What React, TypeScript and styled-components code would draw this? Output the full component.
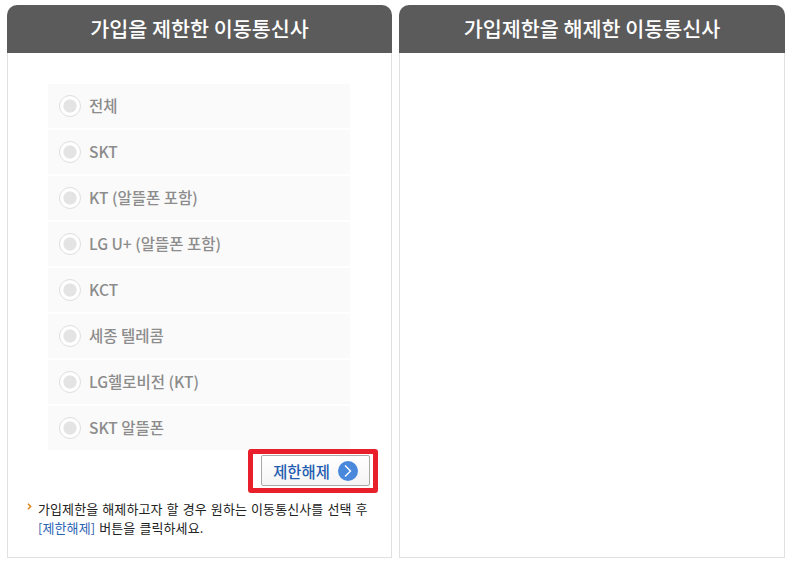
import styled, { createGlobalStyle } from "styled-components";

const carriers = [
  "전체",
  "SKT",
  "KT (알뜰폰 포함)",
  "LG U+ (알뜰폰 포함)",
  "KCT",
  "세종 텔레콤",
  "LG헬로비전 (KT)",
  "SKT 알뜰폰",
];

const App = () => {
  return (
    <>
      <GlobalStyle />
      <Page>
        <Panel>
          <PanelTitle>가입을 제한한 이동통신사</PanelTitle>
          <PanelBody>
            <CarrierList>
              {carriers.map((name) => (
                <CarrierRow key={name}>
                  <Radio />
                  <CarrierName>{name}</CarrierName>
                </CarrierRow>
              ))}
            </CarrierList>
            <ButtonRow>
              <Highlight>
                <ReleaseButton type="button">
                  제한해제
                  <ArrowCircle>
                    <svg width="10" height="14" viewBox="0 0 10 14" fill="none">
                      <path d="M2 1.5 7.5 7 2 12.5" stroke="#fff" strokeWidth="1.4" />
                    </svg>
                  </ArrowCircle>
                </ReleaseButton>
              </Highlight>
            </ButtonRow>
            <Notice>
              <Chevron>
                <svg width="5" height="7" viewBox="0 0 5 7" fill="none">
                  <path d="M1 .8 3.6 3.5 1 6.2" stroke="#e08a1e" strokeWidth="1.6" />
                </svg>
              </Chevron>
              <NoticeText>
                가입제한을 해제하고자 할 경우 원하는 이동통신사를 선택 후
                <br />
                <NoticeLink>[제한해제]</NoticeLink> 버튼을 클릭하세요.
              </NoticeText>
            </Notice>
          </PanelBody>
        </Panel>
        <Panel>
          <PanelTitle>가입제한을 해제한 이동통신사</PanelTitle>
          <PanelBody />
        </Panel>
      </Page>
    </>
  );
};

export default App;

const GlobalStyle = createGlobalStyle`
  html, body {
    margin: 0;
    padding: 0;
    background: #fff;
  }
  body {
    font-family: "Noto Sans CJK KR", "Noto Sans", sans-serif;
  }
`;
const Page = styled.div`
  display: grid;
  grid-template-columns: 385px 386px;
  gap: 7px;
  width: 778px;
  height: 553px;
  padding: 5px 6px 10px 7px;
`;
const Panel = styled.section`
  display: flex;
  flex-direction: column;
  min-width: 0;
`;
const PanelTitle = styled.h2`
  margin: 0;
  height: 48px;
  line-height: 46px;
  border-radius: 10px 10px 0 0;
  background: #5b5b5b;
  color: #fff;
  font-size: 20.7px;
  font-weight: 500;
  text-align: center;
`;
const PanelBody = styled.div`
  flex: 1;
  border: 1px solid #e0e0e0;
  border-top: 0;
  padding: 31px 13px 0 19px;
`;
const CarrierList = styled.ul`
  display: flex;
  flex-direction: column;
  gap: 2px;
  margin: 0 0 0 21px;
  padding: 0;
  width: 302px;
  list-style: none;
`;
const CarrierRow = styled.li`
  display: flex;
  align-items: center;
  gap: 8px;
  height: 44px;
  padding-left: 11px;
  background: #fafafa;
`;
const Radio = styled.span`
  box-sizing: border-box;
  width: 22px;
  height: 22px;
  border: 1px solid #dedede;
  border-radius: 50%;
  background: radial-gradient(circle, #e4e4e4 0 6.3px, #fff 6.9px);
`;
const CarrierName = styled.span`
  position: relative;
  top: -1px;
  color: #8c8c8c;
  font-size: 15.5px;
  font-weight: 500;
`;
const ButtonRow = styled.div`
  display: flex;
  justify-content: flex-end;
  margin-top: -1px;
`;
const Highlight = styled.div`
  display: flex;
  box-sizing: border-box;
  width: 130px;
  height: 44px;
  padding: 1px 3px 2px 8px;
  border: 5px solid #e8202c;
  border-radius: 3px;
`;
const ReleaseButton = styled.button`
  display: flex;
  align-items: center;
  justify-content: center;
  gap: 8px;
  flex: 1;
  padding: 0;
  border: 1px solid #a9a9a9;
  border-radius: 2px;
  background: linear-gradient(#fff, #f4f4f4);
  color: #1f5cb0;
  font-family: inherit;
  font-size: 15.4px;
  font-weight: 500;
`;
const ArrowCircle = styled.span`
  display: flex;
  align-items: center;
  justify-content: center;
  width: 20px;
  height: 20px;
  border-radius: 50%;
  background: #4a88dc;
`;
const Notice = styled.div`
  display: flex;
  gap: 6px;
  margin-top: 6px;
`;
const Chevron = styled.span`
  display: flex;
  margin-top: 4px;
`;
const NoticeText = styled.p`
  margin: 0;
  color: #222;
  font-size: 13px;
  letter-spacing: 0.1px;
  word-spacing: 1px;
  line-height: 19px;
  white-space: nowrap;
`;
const NoticeLink = styled.span`
  color: #2b63b4;
`;
